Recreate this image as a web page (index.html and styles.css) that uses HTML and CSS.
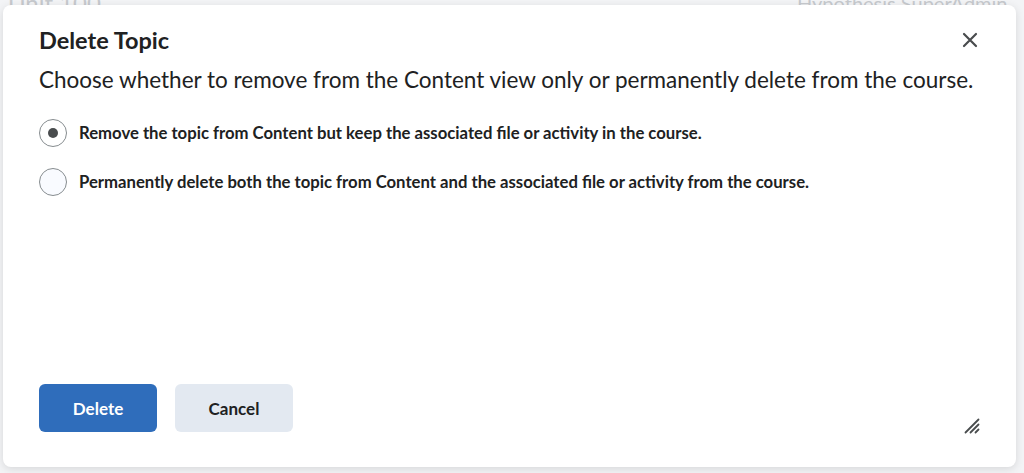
FILE: index.html
```html
<!DOCTYPE html>
<html lang="en">
<head>
    <meta charset="UTF-8">
    <meta name="viewport" content="width=device-width, initial-scale=1.0">
    <title>Delete Topic</title>
    <link rel="stylesheet" href="styles.css">
</head>
<body>
    <div class="backdrop">
        <span class="bg-title">Unit 100</span>
        <span class="bg-user">Hypothesis SuperAdmin</span>
    </div>
    <div class="dialog">
        <div class="dialog-head">
            <h1>Delete Topic</h1>
            <button class="close" aria-label="Close">
                <svg width="16" height="16" viewBox="0 0 16 16"><path d="M2 2 L14 14 M14 2 L2 14" stroke="#494c4e" stroke-width="2.2" stroke-linecap="round"/></svg>
            </button>
        </div>
        <p class="lead">Choose whether to remove from the Content view only or permanently delete from the course.</p>
        <div class="options">
            <label class="option">
                <span class="radio checked"></span>
                Remove the topic from Content but keep the associated file or activity in the course.
            </label>
            <label class="option">
                <span class="radio"></span>
                Permanently delete both the topic from Content and the associated file or activity from the course.
            </label>
        </div>
        <div class="footer">
            <button class="btn primary">Delete</button>
            <button class="btn">Cancel</button>
            <svg class="resize" width="16" height="16" viewBox="0 0 16 16">
                <path d="M1.5 14.5 L14.5 1.5 M6.5 14.5 L14.5 6.5 M11.5 14.5 L14.5 11.5" stroke="#494c4e" stroke-width="1.8" stroke-linecap="round"/>
            </svg>
        </div>
    </div>
</body>
</html>
```

FILE: styles.css
```css
body {
    margin: 0;
    padding: 5px 8px 6px 3px;
    height: 473px;
    box-sizing: border-box;
    overflow: hidden;
    background-color: #f3f4f6;
    font-family: Lato, "Noto Sans", sans-serif;
    color: #202122;
}

.backdrop {
    position: absolute;
    top: -12px;
    left: 0;
    right: 0;
    color: #c7cace;
    font-size: 24px;
    z-index: 0;
}

.bg-title {
    position: absolute;
    left: 8px;
}

.bg-user {
    position: absolute;
    left: 797px;
    font-size: 20px;
    top: 3px;
}

.dialog {
    position: relative;
    z-index: 1;
    height: 462px;
    box-sizing: border-box;
    background-color: #fff;
    border-radius: 8px;
    box-shadow: 0 2px 8px rgba(0, 0, 0, 0.12);
    padding: 20px 36px 0 36px;
    display: flex;
    flex-direction: column;
}

.dialog-head {
    display: flex;
    justify-content: space-between;
    align-items: center;
}

h1 {
    margin: 0;
    font-size: 23.5px;
    font-weight: 700;
    line-height: 30px;
}

.close {
    border: none;
    background: none;
    padding: 0;
    margin-right: 2px;
    width: 16px;
    height: 16px;
    cursor: pointer;
}

.lead {
    margin: 10px 0 0;
    font-size: 22.5px;
    line-height: 30px;
}

.options {
    margin-top: 24px;
    display: flex;
    flex-direction: column;
    gap: 21px;
}

.option {
    display: flex;
    align-items: center;
    gap: 12px;
    font-size: 16.7px;
    font-weight: 700;
    line-height: 28px;
}

.radio {
    width: 26px;
    height: 26px;
    border: 1px solid #868c8f;
    border-radius: 50%;
    background-color: #f9fbff;
    display: flex;
    align-items: center;
    justify-content: center;
    flex-shrink: 0;
}

.radio.checked {
    background-color: #fff;
}

.radio.checked::after {
    content: "";
    width: 10px;
    height: 10px;
    border-radius: 50%;
    background-color: #494c4e;
}

.footer {
    margin-top: auto;
    margin-bottom: 33px;
    display: flex;
    align-items: center;
    gap: 18px;
}

.btn {
    width: 118px;
    height: 48px;
    border: none;
    border-radius: 6px;
    background-color: #e3e9f1;
    color: #202122;
    font-family: Lato, "Noto Sans", sans-serif;
    font-size: 17px;
    font-weight: 700;
    cursor: pointer;
}

.btn.primary {
    background-color: #2f6dbb;
    color: #fff;
}

.resize {
    margin-left: auto;
    margin-right: 0;
    margin-top: 36px;
}
```
